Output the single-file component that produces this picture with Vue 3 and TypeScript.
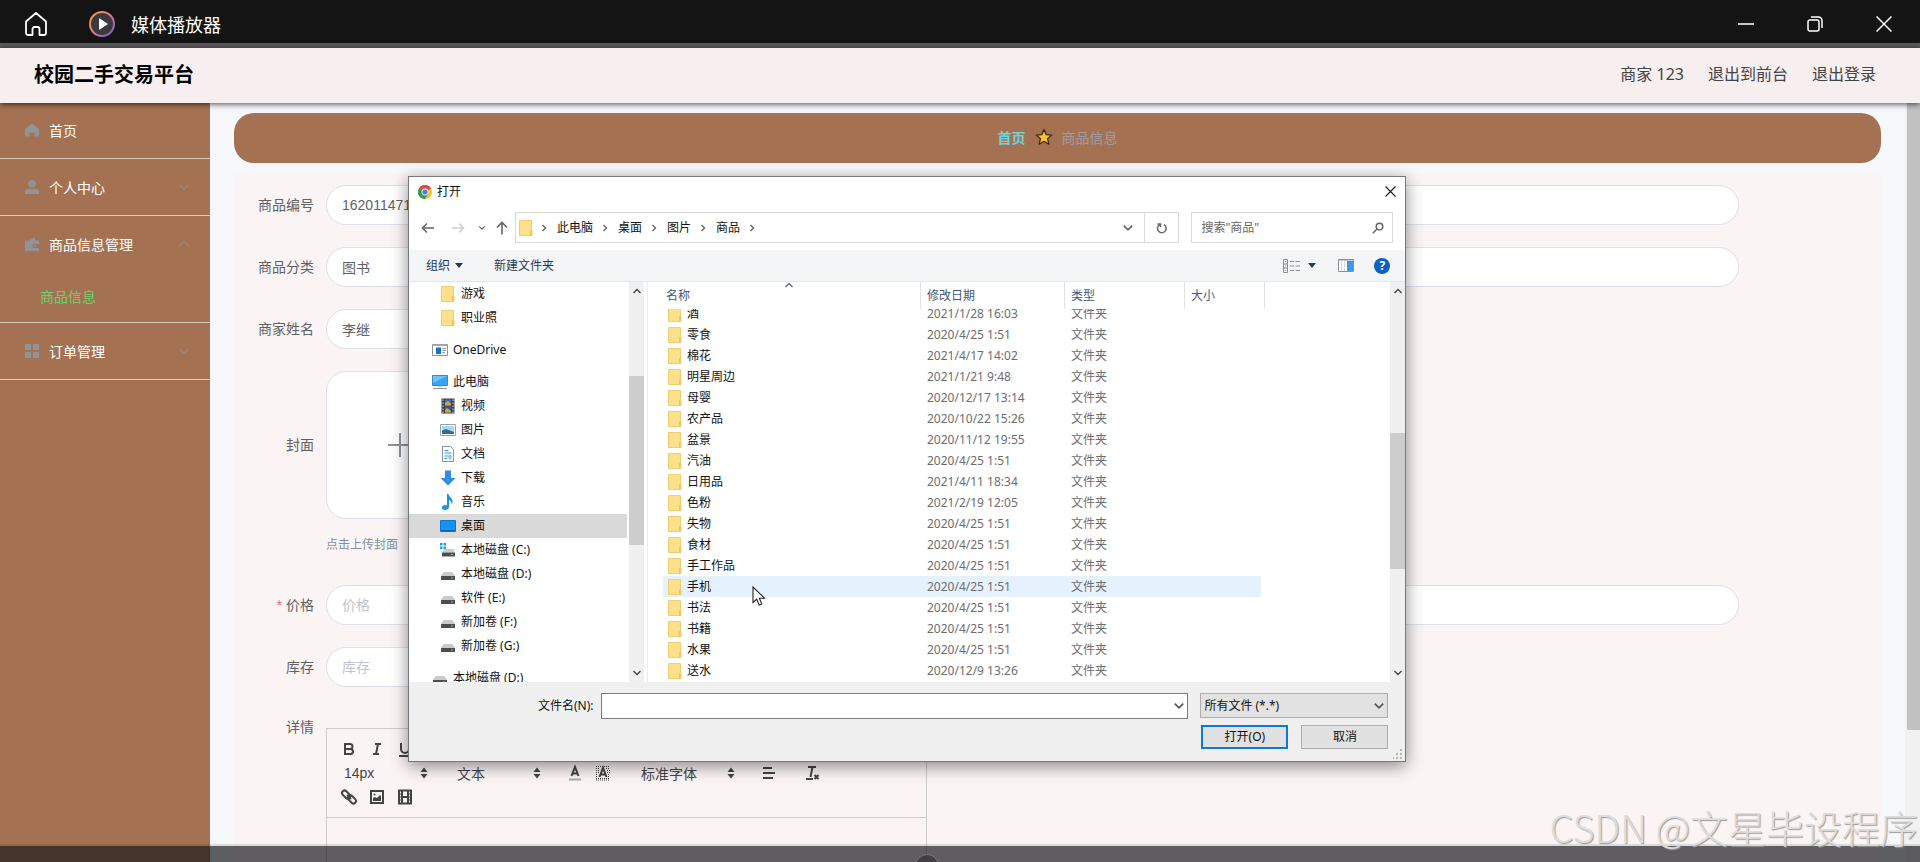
<script setup lang="ts">
import { onMounted, ref } from 'vue'

interface TreeNode {
  label: string
  icon: string
  top?: boolean
  gap?: boolean
  active?: boolean
}

interface Row {
  name: string
  date: string
}

const tree: TreeNode[] = [
  { label: '游戏', icon: 'folder' },
  { label: '职业照', icon: 'folder' },
  { label: 'OneDrive', icon: 'onedrive', top: true, gap: true },
  { label: '此电脑', icon: 'pc', top: true, gap: true },
  { label: '视频', icon: 'video' },
  { label: '图片', icon: 'picture' },
  { label: '文档', icon: 'doc' },
  { label: '下载', icon: 'download' },
  { label: '音乐', icon: 'music' },
  { label: '桌面', icon: 'desktop', active: true },
  { label: '本地磁盘 (C:)', icon: 'sysdisk' },
  { label: '本地磁盘 (D:)', icon: 'disk' },
  { label: '软件 (E:)', icon: 'disk' },
  { label: '新加卷 (F:)', icon: 'disk' },
  { label: '新加卷 (G:)', icon: 'disk' },
  { label: '本地磁盘 (D:)', icon: 'disk', top: true, gap: true },
]

const rows: Row[] = [
  { name: '酒', date: '2021/1/28 16:03' },
  { name: '零食', date: '2020/4/25 1:51' },
  { name: '棉花', date: '2021/4/17 14:02' },
  { name: '明星周边', date: '2021/1/21 9:48' },
  { name: '母婴', date: '2020/12/17 13:14' },
  { name: '农产品', date: '2020/10/22 15:26' },
  { name: '盆景', date: '2020/11/12 19:55' },
  { name: '汽油', date: '2020/4/25 1:51' },
  { name: '日用品', date: '2021/4/11 18:34' },
  { name: '色粉', date: '2021/2/19 12:05' },
  { name: '失物', date: '2020/4/25 1:51' },
  { name: '食材', date: '2020/4/25 1:51' },
  { name: '手工作品', date: '2020/4/25 1:51' },
  { name: '手机', date: '2020/4/25 1:51' },
  { name: '书法', date: '2020/4/25 1:51' },
  { name: '书籍', date: '2020/4/25 1:51' },
  { name: '水果', date: '2020/4/25 1:51' },
  { name: '送水', date: '2020/12/9 13:26' },
]

const crumbs = ['此电脑', '桌面', '图片', '商品']
const hovered = ref('手机')
const code = ref('1620114711')
const category = ref('图书')
const seller = ref('李继')
const price = ref('')
const stock = ref('')
const fileName = ref('')
const listEl = ref<HTMLElement | null>(null)

onMounted(() => {
  if (listEl.value) listEl.value.scrollTop = 6
})
</script>

<template>
  <div class="window">
    <svg class="defs" aria-hidden="true">
      <symbol id="i-folder" viewBox="0 0 16 16">
        <path d="M1.500 .5h12v15h-12z" fill="#fde08a" stroke="#f0cd72" />
        <path d="M12.500 10.500h1.500v5h-1.500z" fill="#f7d57a" stroke="#ecc560" />
      </symbol>
      <symbol id="i-onedrive" viewBox="0 0 16 16">
        <path d="M.5 2.500h15v11H.5z" fill="#fff" stroke="#8d9298" />
        <path d="M.5 2.500h15v1.500H.5z" fill="#a9adb2" />
        <path d="M4 5.500h5v6.500H4z" fill="#1371cf" />
        <path d="M10.500 6.500h3.500M10.500 8.500h3.500M10.500 10.500h2.500" stroke="#8d9298" />
      </symbol>
      <symbol id="i-pc" viewBox="0 0 16 16">
        <path d="M.5 1.500h15v10H.5z" fill="#35a5f3" stroke="#3f88bd" />
        <path d="M1 2h14L1 9z" fill="#6cc3fb" />
        <path d="M6 12h4v1.500H6z" fill="#c6ced4" />
        <path d="M1 14.500h14" stroke="#8d9ba5" />
      </symbol>
      <symbol id="i-video" viewBox="0 0 16 16">
        <path d="M1.500 .5h13v15h-13z" fill="#39404a" />
        <path d="M5 1.500h6v6H5z" fill="#3e6fd0" />
        <path d="M5 8.500h6v6H5z" fill="#3458a8" />
        <path d="M5 5l3-2 3 3v1.500H5zM5 12l2-2 4 3v1.500H5z" fill="#d5a53a" />
        <path d="M3 1.500v14M13 1.500v14" stroke="#d9dde2" stroke-dasharray="1.500 1.500" />
      </symbol>
      <symbol id="i-picture" viewBox="0 0 16 16">
        <path d="M.5 2.500h15v11H.5z" fill="#fff" stroke="#9ba2a9" />
        <path d="M2 4h12v8H2z" fill="#a9d8f7" />
        <path d="M2 8.500l4-1.500 8 3v2H2z" fill="#2e6f91" />
      </symbol>
      <symbol id="i-doc" viewBox="0 0 16 16">
        <path d="M2.500 .5h8l3 3v12h-11z" fill="#fff" stroke="#8b939a" />
        <path d="M4.500 4.500h4M4.500 7h7M4.500 12.500h3M4.500 10h7" stroke="#3d9ad8" />
        <path d="M8.500 9.500h3v4h-3z" fill="#8fc8ec" />
      </symbol>
      <symbol id="i-download" viewBox="0 0 16 16">
        <path d="M5 .5h6V8h4.500L8 15.500.5 8H5z" fill="#2f8de4" />
      </symbol>
      <symbol id="i-music" viewBox="0 0 16 16">
        <path d="M7 0h1.500c.5 3 4 4 4 7.500 0 1.500-.5 2.500-1 3 .3-3-1.200-4-2.500-4.500V13c0 2-2 3-4 3s-3-1-3-2.300C2 12 3.500 11 5 11c1 0 1.500.2 2 .5z" fill="#1b93e8" />
      </symbol>
      <symbol id="i-desktop" viewBox="0 0 16 16">
        <path d="M.5 2.500h15v11H.5z" fill="#1295fb" stroke="#1572bf" />
        <path d="M1 12.500h14" stroke="#0b5fa8" />
      </symbol>
      <symbol id="i-disk" viewBox="0 0 16 16">
        <path d="M3.500 6h9L15 10H1z" fill="#c9cbcc" />
        <path d="M1 10h14v4H1z" fill="#4b4e50" />
        <path d="M11 12h2" stroke="#6fe06f" />
      </symbol>
      <symbol id="i-sysdisk" viewBox="0 0 16 16">
        <path d="M0 1h2.500v2.500H0zM3.500 1H6v2.500H3.500zM0 4.500h2.500V7H0zM3.500 4.500H6V7H3.500z" fill="#19a0e6" />
        <path d="M4.500 7h8.500l2 3.500H2z" fill="#c9cbcc" />
        <path d="M2 10.500h13v4H2z" fill="#4b4e50" />
        <path d="M11 12.500h2" stroke="#6fe06f" />
      </symbol>
      <symbol id="i-down" viewBox="0 0 10 10">
        <path d="M1.500 3L5 6.500 8.500 3" fill="none" stroke="currentColor" stroke-width="1.400" />
      </symbol>
      <symbol id="i-up" viewBox="0 0 10 10">
        <path d="M1.500 7L5 3.500 8.500 7" fill="none" stroke="currentColor" stroke-width="1.400" />
      </symbol>
      <symbol id="i-right" viewBox="0 0 10 10">
        <path d="M3.500 2L6.500 5 3.500 8" fill="none" stroke="currentColor" stroke-width="1.400" />
      </symbol>
      <symbol id="i-picker" viewBox="0 0 18 18">
        <path d="M9 3.500l3.500 4.500h-7zM9 14.500L5.500 10h7z" fill="currentColor" />
      </symbol>
    </svg>

    <header class="player">
      <button class="player-home" aria-label="主页">
        <svg width="24" height="26" viewBox="0 0 24 26" fill="none" stroke="#fff" stroke-width="1.800" stroke-linejoin="round">
          <path d="M2 10.500L12 2l10 8.500V22a2 2 0 0 1-2 2h-4.500v-6a2 2 0 0 0-2-2h-3a2 2 0 0 0-2 2v6H4a2 2 0 0 1-2-2z" />
        </svg>
      </button>
      <svg class="player-logo" width="26" height="26" viewBox="0 0 26 26">
        <defs>
          <linearGradient id="ring" x1="0" y1="0" x2="1" y2="1">
            <stop offset="0" stop-color="#ff9a3c" />
            <stop offset=".5" stop-color="#d97c8c" />
            <stop offset="1" stop-color="#7a55d8" />
          </linearGradient>
        </defs>
        <circle cx="13" cy="13" r="12" fill="#3a3a3c" stroke="url(#ring)" stroke-width="2" />
        <path d="M10 7l9 6-9 6z" fill="#fff" />
      </svg>
      <span class="player-title">媒体播放器</span>
      <div class="player-controls">
        <button aria-label="最小化"><svg width="16" height="16" viewBox="0 0 16 16"><path d="M0 8h16" stroke="#fff" stroke-width="1.500" /></svg></button>
        <button aria-label="还原">
          <svg width="16" height="16" viewBox="0 0 16 16" fill="none" stroke="#fff" stroke-width="1.500">
            <rect x="1" y="4" width="11" height="11" rx="2" />
            <path d="M4 1h7.500A3.500 3.500 0 0 1 15 4.500V12" />
          </svg>
        </button>
        <button aria-label="关闭"><svg width="16" height="16" viewBox="0 0 16 16"><path d="M.5 .5l15 15M15.500 .5l-15 15" stroke="#fff" stroke-width="1.500" /></svg></button>
      </div>
    </header>

    <header class="site">
      <h1>校园二手交易平台</h1>
      <nav class="site-nav">
        <span>商家 123</span>
        <a href="#">退出到前台</a>
        <a href="#">退出登录</a>
      </nav>
    </header>

    <div class="body">
      <nav class="sidebar">
        <div class="menu">
          <a href="#" class="menu-item">
            <svg class="menu-icon" viewBox="0 0 14 14"><path d="M7 .5l7 5.500v7.500H9.500V9.500h-5v4H0V6z" fill="#909399" /></svg>
            <span>首页</span>
          </a>
        </div>
        <div class="menu">
          <a href="#" class="menu-item">
            <svg class="menu-icon" viewBox="0 0 14 14"><circle cx="7" cy="3.800" r="3.800" fill="#909399" /><path d="M0 14v-2c0-2 1.500-3 3-3h8c1.500 0 3 1 3 3v2z" fill="#909399" /></svg>
            <span>个人中心</span>
            <svg class="menu-arrow" viewBox="0 0 10 10"><path d="M.5 3L5 7.500 9.500 3" fill="none" stroke="#909399" /></svg>
          </a>
        </div>
        <div class="menu">
          <a href="#" class="menu-item">
            <svg class="menu-icon" viewBox="0 0 14 14"><path d="M0 3.500h4L9 .5l2 3h3v3.500H9.500a1.500 1.500 0 0 0 0 4H14V14H0z" fill="#909399" /><circle cx="10" cy="9" r="1" fill="#909399" /></svg>
            <span>商品信息管理</span>
            <svg class="menu-arrow" viewBox="0 0 10 10"><path d="M.5 7L5 2.500 9.500 7" fill="none" stroke="#909399" /></svg>
          </a>
          <a href="#" class="menu-sub">商品信息</a>
        </div>
        <div class="menu">
          <a href="#" class="menu-item">
            <svg class="menu-icon" viewBox="0 0 14 14"><path d="M0 0h6v6H0zM8 0h6v6H8zM0 8h6v6H0zM8 8h6v6H8z" fill="#909399" /></svg>
            <span>订单管理</span>
            <svg class="menu-arrow" viewBox="0 0 10 10"><path d="M.5 3L5 7.500 9.500 3" fill="none" stroke="#909399" /></svg>
          </a>
        </div>
      </nav>

      <main class="main">
        <nav class="crumb-bar">
          <a href="#">首页</a>
          <svg width="18" height="18" viewBox="0 0 18 18"><path d="M9 1.500l2.200 5.200 5.600.4-4.300 3.600 1.400 5.500L9 13.300l-4.900 2.900 1.400-5.500L1.200 7.100l5.600-.4z" fill="#ffbf2e" stroke="#3a2a14" stroke-width="1.300" stroke-linejoin="round" /></svg>
          <span>商品信息</span>
        </nav>
        <form class="panel" @submit.prevent>
          <div class="field"><label for="code">商品编号</label><input id="code" v-model="code" readonly /></div>
          <div class="field"><label for="category">商品分类</label><input id="category" v-model="category" readonly /></div>
          <div class="field half"><label for="seller">商家姓名</label><input id="seller" v-model="seller" readonly /></div>
          <div class="field cover">
            <label for="cover">封面</label>
            <div>
              <button id="cover" type="button" class="upload" aria-label="上传">
                <svg width="24" height="24" viewBox="0 0 24 24"><path d="M12 0v24M0 12h24" stroke="#8c939d" stroke-width="2" /></svg>
              </button>
              <p class="tip">点击上传封面</p>
            </div>
          </div>
          <div class="field"><label for="price"><i>*</i>价格</label><input id="price" v-model="price" placeholder="价格" /></div>
          <div class="field half"><label for="stock">库存</label><input id="stock" v-model="stock" placeholder="库存" /></div>
          <div class="field detail">
            <label for="detail">详情</label>
            <div class="editor">
              <div class="tools">
                <div class="tool-row">
                  <button type="button" aria-label="粗体"><svg viewBox="0 0 18 18"><path d="M5 4h5a2.500 2.500 0 0 1 0 5H5zM5 9h5.500a2.500 2.500 0 0 1 0 5H5z" /></svg></button>
                  <button type="button" aria-label="斜体"><svg viewBox="0 0 18 18"><path d="M7 4h6M5 14h6M10 4l-2 10" /></svg></button>
                  <button type="button" aria-label="下划线"><svg viewBox="0 0 18 18"><path d="M5 3v6a4 4 0 0 0 8 0V3M3 16h12" /></svg></button>
                </div>
                <div class="tool-row">
                  <button type="button" class="picker">14px<svg viewBox="0 0 18 18"><use href="#i-picker" /></svg></button>
                  <button type="button" class="picker">文本<svg viewBox="0 0 18 18"><use href="#i-picker" /></svg></button>
                  <span class="pair">
                    <button type="button" aria-label="文字颜色"><svg viewBox="0 0 18 18"><path d="M5.500 12L9 3l3.500 9M6.500 9.500h5" /><path class="faint" d="M3 15.500h12" /></svg></button>
                    <button type="button" aria-label="背景颜色"><svg viewBox="0 0 18 18"><path class="thin" stroke-dasharray="1 1" d="M2 2.500h14M2 4.500h4M12 4.500h4M2 6.500h3M13 6.500h3M2 8.500h3M13 8.500h3M2 10.500h2M14 10.500h2M2 12.500h2M14 12.500h2M2 14.500h14M2 16h14" /><path d="M5.500 13L9 4l3.500 9M6.500 10.500h5" /></svg></button>
                  </span>
                  <button type="button" class="picker wide">标准字体<svg viewBox="0 0 18 18"><use href="#i-picker" /></svg></button>
                  <button type="button" class="spaced" aria-label="对齐"><svg viewBox="0 0 18 18"><path d="M3 4h9M3 9h12M3 14h10" /></svg></button>
                  <button type="button" aria-label="清除格式"><svg viewBox="0 0 18 18"><path d="M5 3h8M9.500 3L7.500 13M3 15h7M11.500 11l4 4M15.500 11l-4 4" /></svg></button>
                </div>
                <div class="tool-row">
                  <button type="button" aria-label="链接"><svg viewBox="0 0 18 18"><rect x="1.500" y="4" width="9" height="5" rx="2.500" transform="rotate(45 6 6.500)" /><rect x="7.500" y="9" width="9" height="5" rx="2.500" transform="rotate(45 12 11.500)" /><path d="M7 7l4 4" /></svg></button>
                  <button type="button" aria-label="图片"><svg viewBox="0 0 18 18"><path d="M3 3h12v12H3z" /><path class="solid" d="M5 13v-3l2-1 2 1 3-3 1 1v5z" /><circle class="solid" cx="6.500" cy="6.500" r="1" /></svg></button>
                  <button type="button" aria-label="视频"><svg viewBox="0 0 18 18"><path d="M3 2.500h12v13H3zM6 2.500v13M12 2.500v13M6 9h6" /><path class="thin" d="M3 6h3M3 9h3M3 12h3M12 6h3M12 9h3M12 12h3" /></svg></button>
                </div>
              </div>
              <textarea id="detail"></textarea>
            </div>
          </div>
        </form>
      </main>
      <div class="page-scroll"><div class="page-thumb"></div></div>
    </div>

    <section class="dialog" role="dialog" aria-labelledby="dlg-title">
      <div class="dlg-title">
        <svg width="14" height="14" viewBox="0 0 14 14">
          <circle cx="7" cy="7" r="7" fill="#fbc02d" />
          <path d="M7 7L.9 3.500A7 7 0 0 1 13.100 3.500z" fill="#e04a3a" />
          <path d="M7 7L.9 3.500A7 7 0 0 0 7 14l3-5z" fill="#2f9c57" />
          <circle cx="7" cy="7" r="3.400" fill="#fff" />
          <circle cx="7" cy="7" r="2.600" fill="#3f82e8" />
        </svg>
        <h2 id="dlg-title">打开</h2>
        <button class="dlg-close" aria-label="关闭"><svg width="11" height="11" viewBox="0 0 11 11"><path d="M.5 .5l10 10M10.500 .5l-10 10" stroke="#222" stroke-width="1.200" /></svg></button>
      </div>

      <div class="dlg-nav">
        <button class="nav-back" aria-label="返回"><svg width="14" height="14" viewBox="0 0 14 14" fill="none" stroke="#666" stroke-width="1.600"><path d="M13 7H1.500M6 2.500L1.500 7 6 11.500" /></svg></button>
        <button class="nav-fwd" aria-label="前进"><svg width="14" height="14" viewBox="0 0 14 14" fill="none" stroke="#cfcfcf" stroke-width="1.600"><path d="M1 7h11.500M8 2.500L12.500 7 8 11.500" /></svg></button>
        <button class="nav-recent" aria-label="最近"><svg width="8" height="8"><use href="#i-down" /></svg></button>
        <button class="nav-up" aria-label="上移"><svg width="14" height="14" viewBox="0 0 14 14" fill="none" stroke="#666" stroke-width="1.600"><path d="M7 13.500V1.500M2 6.500l5-5 5 5" /></svg></button>
        <div class="address">
          <svg width="16" height="16"><use href="#i-folder" /></svg>
          <svg class="sep first" width="10" height="10"><use href="#i-right" /></svg>
          <template v-for="c in crumbs" :key="c">
            <a href="#">{{ c }}</a>
            <svg class="sep" width="10" height="10"><use href="#i-right" /></svg>
          </template>
          <button class="addr-drop" aria-label="历史"><svg width="12" height="12"><use href="#i-down" /></svg></button>
          <button class="addr-refresh" aria-label="刷新"><svg width="12" height="12" viewBox="0 0 12 12" fill="none" stroke="#666" stroke-width="1.500"><path d="M3.500 2.800A4.300 4.300 0 1 0 8 2.700M1.500 2h3v3" /></svg></button>
        </div>
        <label class="search">
          <input type="search" placeholder='搜索"商品"' aria-label="搜索" />
          <svg width="12" height="12" viewBox="0 0 12 12" fill="none" stroke="#666" stroke-width="1.500"><circle cx="7.500" cy="4.500" r="3.300" /><path d="M5 7L.8 11.200" /></svg>
        </label>
      </div>

      <div class="dlg-tools">
        <button>组织<svg width="8" height="5" viewBox="0 0 8 5"><path d="M0 0h8L4 5z" fill="#1e395b" /></svg></button>
        <button>新建文件夹</button>
        <button class="view" aria-label="视图">
          <svg width="17" height="14" viewBox="0 0 17 14" fill="none" stroke="#8d8d8d"><path d="M.5 .5h4v13h-4zM.5 5h4M.5 9h4M7 2.500h4M12.500 2.500H17M7 7h4M12.500 7H17M7 11.500h4M12.500 11.500H17" /><path d="M2 2.500h1M2 7h1M2 11.500h1" stroke="#bf7f7f" /></svg>
        </button>
        <button class="view-more" aria-label="更多"><svg width="8" height="5" viewBox="0 0 8 5"><path d="M0 0h8L4 5z" fill="#1e395b" /></svg></button>
        <button class="pane" aria-label="预览"><svg width="16" height="13" viewBox="0 0 16 13"><path d="M.5 .5h15v12H.5z" fill="#fff" stroke="#8b8f94" /><path d="M.5 1h15" stroke="#8b8f94" /><path d="M3.500 2v10M6.500 2v10" stroke="#d7d9dc" /><path d="M9 2h6v10H9z" fill="#3d97ea" /></svg></button>
        <button class="help" aria-label="帮助">?</button>
      </div>

      <div class="dlg-main">
        <ul class="tree">
          <li v-for="(n, i) in tree" :key="i" :class="{ top: n.top, gap: n.gap, active: n.active }">
            <svg width="16" height="16"><use :href="'#i-' + n.icon" /></svg>
            <span>{{ n.label }}</span>
          </li>
        </ul>
        <div class="bar">
          <svg width="10" height="10"><use href="#i-up" /></svg>
          <div class="thumb tree-thumb"></div>
          <svg width="10" height="10"><use href="#i-down" /></svg>
        </div>
        <div ref="listEl" class="list">
          <table>
            <colgroup><col class="c-name" /><col class="c-date" /><col class="c-type" /><col class="c-size" /></colgroup>
            <thead>
              <tr>
                <th>名称<svg class="sort" width="10" height="10"><use href="#i-up" /></svg></th>
                <th>修改日期</th>
                <th>类型</th>
                <th>大小</th>
              </tr>
            </thead>
            <tbody>
              <tr v-for="r in rows" :key="r.name" :class="{ hover: r.name === hovered }">
                <td class="name"><svg width="16" height="16"><use href="#i-folder" /></svg>{{ r.name }}</td>
                <td>{{ r.date }}</td>
                <td>文件夹</td>
                <td></td>
              </tr>
            </tbody>
          </table>
        </div>
        <div class="bar">
          <svg width="10" height="10"><use href="#i-up" /></svg>
          <div class="thumb list-thumb"></div>
          <svg width="10" height="10"><use href="#i-down" /></svg>
        </div>
      </div>

      <div class="dlg-foot">
        <label class="file-label" for="file">文件名(N):</label>
        <div class="combo">
          <input id="file" v-model="fileName" />
          <svg width="12" height="12"><use href="#i-down" /></svg>
        </div>
        <div class="foot-right">
          <div class="type">
            <select aria-label="文件类型"><option>所有文件 (*.*)</option></select>
            <svg width="12" height="12"><use href="#i-down" /></svg>
          </div>
          <div class="actions">
            <button class="primary">打开(O)</button>
            <button>取消</button>
          </div>
        </div>
        <svg class="grip" width="10" height="10" viewBox="0 0 10 10"><path d="M7 0h2v2H7zM7 4h2v2H7zM7 8h2v2H7zM3 4h2v2H3zM3 8h2v2H3zM0 8h1v2H0z" fill="#b5b5b5" /></svg>
      </div>
    </section>

    <svg class="cursor" width="14" height="21" viewBox="0 0 14 21"><path d="M1 1v15.500l3.700-3.400 2.500 5.900 2.600-1.100-2.500-5.700H12.500z" fill="#fff" stroke="#222" stroke-width="1.100" /></svg>
    <div class="bottom-bar"><span class="knob"></span></div>
    <div class="watermark">CSDN @文星毕设程序</div>
  </div>
</template>

<style>
body {
  margin: 0;
  overflow: hidden;
}
</style>

<style scoped>
.window {
  position: relative;
  display: flex;
  flex-direction: column;
  height: 100vh;
  overflow: hidden;
  background: #f6f8fc;
  font-family: "Liberation Sans", "Noto Sans CJK SC", sans-serif;
  font-size: 14px;
  color: #606266;
}
.window *,
.window *::before {
  box-sizing: border-box;
}
.defs {
  position: absolute;
  width: 0;
  height: 0;
}
svg {
  flex: none;
}
button {
  padding: 0;
  border: 0;
  background: none;
  font: inherit;
  color: inherit;
  display: flex;
  align-items: center;
  justify-content: center;
}
input,
select,
textarea {
  font: inherit;
  color: inherit;
  outline: none;
}
a {
  color: inherit;
  text-decoration: none;
}

.player {
  flex: none;
  display: flex;
  align-items: center;
  height: 48px;
  padding: 4px 28px 0 24px;
  background: #141414;
  border-bottom: 5px solid #5d5a5d;
  color: #fff;
}
.player-logo {
  margin-left: 41px;
}
.player-title {
  margin-left: 16px;
  font-size: 18px;
}
.player-controls {
  display: flex;
  gap: 53px;
  margin-left: auto;
}

.site {
  flex: none;
  display: flex;
  align-items: center;
  justify-content: space-between;
  height: 55px;
  padding: 0 44px 5px 34px;
  background: #f7eeef;
  box-shadow: 0 1px 6px rgba(0, 0, 0, 0.7);
  z-index: 2;
}
.site h1 {
  margin: 0;
  font-size: 20px;
  color: #000;
}
.site-nav {
  display: flex;
  gap: 24px;
  font-family: "Noto Sans", "Noto Sans CJK SC", sans-serif;
  font-size: 16px;
  color: #444;
}

.body {
  flex: 1;
  display: flex;
  min-height: 0;
}
.sidebar {
  flex: none;
  width: 210px;
  margin-top: -1px;
  background: #a47252;
  color: #fff;
}
.menu {
  border-bottom: 1px solid #dccabd;
}
.menu-item {
  display: flex;
  align-items: center;
  height: 56px;
  padding: 0 21px 0 25px;
}
.menu-icon {
  width: 14px;
  height: 14px;
  margin-right: 10px;
}
.menu-arrow {
  width: 10px;
  height: 10px;
  margin-left: auto;
}
.menu-sub {
  display: flex;
  align-items: center;
  height: 50px;
  padding: 0 0 2px 40px;
  color: #6bd36b;
}

.main {
  flex: 1;
  min-width: 0;
  padding: 10px 24px 0;
  overflow: hidden;
}
.crumb-bar {
  display: flex;
  align-items: center;
  justify-content: center;
  gap: 9px;
  height: 50px;
  padding-bottom: 2px;
  border-radius: 20px;
  background: #a47252;
  color: #a39ba3;
}
.crumb-bar a {
  font-weight: bold;
  color: #6fd3dd;
}
.panel {
  margin-top: 10px;
  padding: 12px 142px 24px 0;
  background: #faf4f4;
}
.field {
  display: flex;
  margin-bottom: 22px;
}
.field > label {
  flex: none;
  width: 92px;
  padding-right: 12px;
  line-height: 40px;
  text-align: right;
}
.field label i {
  margin-right: 4px;
  font-style: normal;
  color: #f56c6c;
}
.field > input {
  flex: 1;
  min-width: 0;
  height: 40px;
  padding: 0 15px;
  border: 1px solid #dfdfea;
  border-radius: 20px;
  background: #fff;
}
.half > input {
  max-width: 50%;
}
.field input::placeholder {
  color: #c0c4cc;
}
.cover > label {
  line-height: 148px;
}
.upload {
  width: 148px;
  height: 148px;
  border: 1px solid #dfdfea;
  border-radius: 20px;
  background: #fff;
}
.tip {
  margin: 9px 0 0;
  font-size: 12px;
  line-height: 35px;
  color: #838fa1;
}
.detail > label {
  margin-top: -2px;
}
.editor {
  width: 601px;
  margin-top: 19px;
  border: 1px solid #ccc;
}
.tools {
  padding: 8px;
  border-bottom: 1px solid #ccc;
  color: #444;
}
.tool-row {
  display: flex;
  height: 24px;
}
.tool-row button {
  width: 28px;
}
.tool-row svg {
  width: 18px;
  height: 18px;
  fill: none;
  stroke: #444;
  stroke-width: 2;
}
.tool-row .picker {
  justify-content: space-between;
  width: 98px;
  margin-right: 15px;
  padding-left: 9px;
}
.tool-row .picker svg {
  stroke: none;
}
.tool-row .wide {
  width: 108px;
}
.tool-row .pair {
  display: flex;
  margin-right: 15px;
}
.tool-row .spaced {
  margin-right: 15px;
}
.tool-row .faint {
  stroke: #aaa;
}
.tool-row .thin {
  stroke-width: 1;
}
.tool-row .solid {
  fill: #444;
  stroke: none;
}
.editor textarea {
  display: block;
  width: 100%;
  height: 200px;
  border: 0;
  background: transparent;
  resize: none;
}
.page-scroll {
  flex: none;
  width: 15px;
  padding-left: 2px;
  background: #f1f1f1;
}
.page-thumb {
  height: 82.6%;
  background: #c1c1c1;
}

.dialog {
  position: absolute;
  z-index: 5;
  left: 408px;
  top: 176px;
  width: 52%;
  border: 1px solid #77787b;
  background: #fff;
  box-shadow: 0 4px 16px rgba(0, 0, 0, 0.45);
  font-family: "Noto Sans", "Noto Sans CJK SC", sans-serif;
  font-size: 12px;
  line-height: 18px;
  color: #111;
}
.dlg-title {
  display: flex;
  align-items: center;
  height: 29px;
  padding: 0 9px 0 9px;
}
.dlg-title h2 {
  margin: 0 0 0 5px;
  font-size: 12px;
  font-weight: normal;
}
.dlg-close {
  margin-left: auto;
}
.dlg-nav {
  display: flex;
  align-items: center;
  height: 44px;
  padding: 0 12px 1px 12px;
  color: #666;
}
.nav-fwd {
  margin-left: 16px;
}
.nav-recent {
  margin-left: 13px;
}
.nav-up {
  margin: 0 6px 0 9px;
}
.address {
  flex: 1;
  display: flex;
  align-items: center;
  height: 31px;
  padding-left: 2px;
  border: 1px solid #d9d9d9;
  color: #666;
}
.address a {
  color: #111;
}
.sep {
  margin: 0 8px 0 7px;
}
.sep.first {
  margin-left: 5px;
}
.addr-drop {
  margin-left: auto;
  width: 32px;
  height: 29px;
}
.addr-refresh {
  width: 34px;
  height: 29px;
  border-left: 1px solid #d9d9d9;
}
.search {
  display: flex;
  align-items: center;
  width: 202px;
  height: 31px;
  margin-left: 12px;
  padding: 0 8px 0 9px;
  border: 1px solid #d9d9d9;
}
.search input {
  flex: 1;
  min-width: 0;
  padding: 0;
  border: 0;
}
.search input::placeholder {
  color: #666;
}
.dlg-tools {
  display: flex;
  align-items: center;
  height: 32px;
  padding: 0 15px 0 17px;
  background: #f4f5f7;
  border-bottom: 1px solid #e4e6e9;
  color: #1e395b;
}
.dlg-tools button {
  gap: 5px;
  margin-right: 31px;
}
.dlg-tools .view {
  margin: 0 8px 0 auto;
}
.dlg-tools .view-more {
  margin-right: 22px;
}
.dlg-tools .pane {
  margin-right: 20px;
}
.dlg-tools .help {
  width: 16px;
  height: 16px;
  margin-right: 0;
  border-radius: 50%;
  background: #0a60c4;
  color: #fff;
  font-weight: bold;
}
.dlg-main {
  display: flex;
  height: 400px;
}
.tree {
  flex: none;
  width: 220px;
  margin: 0;
  padding: 0 2px 0 0;
  list-style: none;
  overflow: hidden;
}
.tree li {
  display: flex;
  align-items: center;
  gap: 5px;
  height: 24px;
  padding-left: 31px;
}
.tree .top {
  padding-left: 23px;
}
.tree .gap {
  margin-top: 8px;
}
.tree .active {
  background: #d9d9d9;
}
.bar {
  flex: none;
  display: flex;
  flex-direction: column;
  align-items: center;
  width: 15px;
  padding: 4px 0;
  background: #f0f0f0;
  color: #444;
}
.thumb {
  width: 15px;
  background: #cdcdcd;
}
.tree-thumb {
  height: 169px;
  margin: 80px 0 auto;
}
.list-thumb {
  height: 136px;
  margin: 137px 0 auto;
}
.list {
  flex: 1;
  min-width: 0;
  margin-left: 3px;
  padding: 0 0 12px 15px;
  border-left: 1px solid #ececec;
  overflow: hidden;
}
.list table {
  width: 602px;
  border-collapse: separate;
  border-spacing: 0;
  table-layout: fixed;
}
.c-name {
  width: 258px;
}
.c-date {
  width: 144px;
}
.c-type {
  width: 120px;
}
.c-size {
  width: 80px;
}
.list th {
  position: sticky;
  top: 0;
  height: 27px;
  padding: 0 6px;
  border-right: 1px solid #e3e3e3;
  background: #fff;
  font-weight: normal;
  text-align: left;
  color: #44597a;
}
.list th:first-child {
  padding-left: 3px;
}
.sort {
  position: absolute;
  left: 47%;
  top: -2px;
  color: #666;
}
.list td {
  height: 21px;
  padding: 0 6px;
  color: #6d6d6d;
}
.list .name {
  display: flex;
  align-items: center;
  gap: 4px;
  padding-left: 4px;
  color: #111;
}
.list .hover td {
  background: #e5f1fd;
}
.list .hover td:last-child {
  border-right: 4px solid #fff;
}
.dlg-foot {
  position: relative;
  display: flex;
  align-items: flex-start;
  height: 79px;
  padding: 11px 17px 0 129px;
  background: #f0f0f0;
}
.file-label {
  padding: 4px 7px 0 0;
}
.combo,
.type {
  position: relative;
}
.combo {
  flex: 1;
}
.combo input {
  display: block;
  width: 100%;
  height: 26px;
  padding: 0 4px;
  border: 1px solid #7a7d80;
  background: #fff;
}
.combo svg,
.type svg {
  position: absolute;
  right: 3px;
  top: 7px;
  color: #555;
}
.foot-right {
  width: 188px;
  margin-left: 12px;
}
.type select {
  display: block;
  width: 100%;
  height: 25px;
  padding: 0 3px;
  border: 1px solid #adadad;
  border-radius: 0;
  background: #e3e2e3;
  appearance: none;
}
.actions {
  display: flex;
  justify-content: space-between;
  margin: 7px 0 0 1px;
}
.actions button {
  width: 87px;
  height: 24px;
  border: 1px solid #adadad;
  background: #e1e1e1;
}
.actions .primary {
  border: 2px solid #0f78d6;
}
.grip {
  position: absolute;
  right: 2px;
  bottom: 2px;
}
.cursor {
  position: absolute;
  z-index: 6;
  left: 752px;
  top: 586px;
}
.bottom-bar {
  position: absolute;
  z-index: 4;
  left: 0;
  right: 0;
  bottom: 0;
  height: 18px;
  border-top: 2px solid rgba(25, 25, 27, 0.12);
  background: rgba(25, 25, 27, 0.69);
  background-clip: padding-box;
  overflow: hidden;
}
.knob {
  position: absolute;
  left: 915px;
  top: 8px;
  width: 24px;
  height: 24px;
  border: 1px solid #777;
  border-radius: 50%;
  background: #414041;
}
.watermark {
  position: absolute;
  z-index: 7;
  right: 2px;
  bottom: 7px;
  font-family: "Noto Sans CJK SC", sans-serif;
  font-size: 38px;
  font-weight: 300;
  line-height: 56px;
  color: #dedcdc;
  text-shadow: 1px 1px 1px #9b9b9b;
}
</style>
